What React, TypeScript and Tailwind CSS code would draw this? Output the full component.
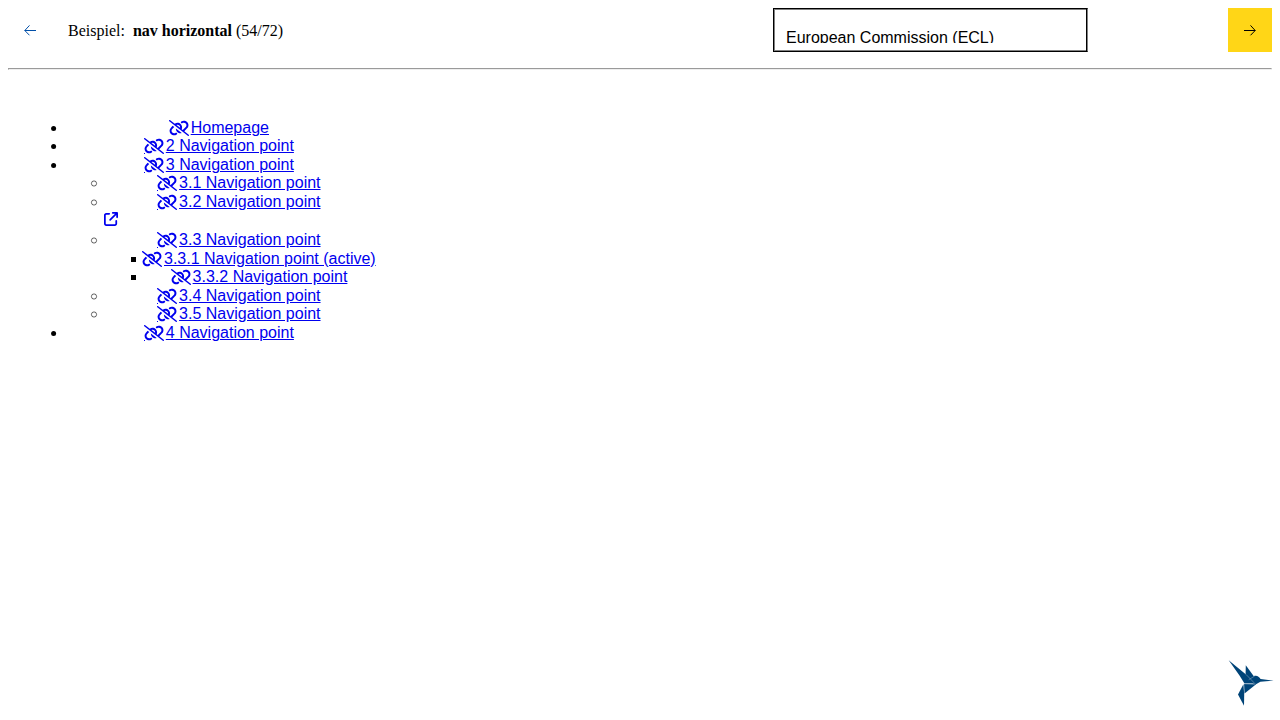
import { FaArrowUpRightFromSquare, FaLinkSlash } from "react-icons/fa6";

type Marker = "disc" | "circle" | "square";
type Item = { label: string; marker: Marker; bullet: string; gap: string; tick?: boolean; external?: boolean };

const items: Item[] = [
  { label: "Homepage", marker: "disc", bullet: "ml-[51px]", gap: "ml-[111.7px]" },
  { label: "2 Navigation point", marker: "disc", bullet: "ml-[51px]", gap: "ml-[86.8px]", tick: true },
  { label: "3 Navigation point", marker: "disc", bullet: "ml-[51px]", gap: "ml-[86.8px]", tick: true },
  { label: "3.1 Navigation point", marker: "circle", bullet: "ml-[90.5px]", gap: "ml-[60.6px]", tick: true },
  { label: "3.2 Navigation point", marker: "circle", bullet: "ml-[90.5px]", gap: "ml-[60.6px]", tick: true, external: true },
  { label: "3.3 Navigation point", marker: "circle", bullet: "ml-[90.5px]", gap: "ml-[60.6px]", tick: true },
  { label: "3.3.1 Navigation point (active)", marker: "square", bullet: "ml-[131px]", gap: "ml-[5px]" },
  { label: "3.3.2 Navigation point", marker: "square", bullet: "ml-[131px]", gap: "ml-[33.6px]" },
  { label: "3.4 Navigation point", marker: "circle", bullet: "ml-[90.5px]", gap: "ml-[60.6px]", tick: true },
  { label: "3.5 Navigation point", marker: "circle", bullet: "ml-[90.5px]", gap: "ml-[60.6px]", tick: true },
  { label: "4 Navigation point", marker: "disc", bullet: "ml-[51px]", gap: "ml-[86.8px]", tick: true },
];

function Bullet({ kind }: { kind: Marker }) {
  return (
    <svg width="6" height="6" viewBox="0 0 6 6" className="shrink-0 overflow-visible">
      {kind === "disc" && <circle cx="2.6" cy="3.5" r="2.5" />}
      {kind === "circle" && <circle cx="3" cy="3.5" r="2.6" fill="none" stroke="#000" strokeWidth="0.6" />}
      {kind === "square" && <rect x="0" y="1" width="5" height="5" />}
    </svg>
  );
}

function Arrow({ flip = false }: { flip?: boolean }) {
  return (
    <svg width="12" height="12" viewBox="0 0 12 12" fill="none" stroke="currentColor" strokeWidth="1" className={flip ? "-scale-x-100" : ""}>
      <path d="M12 6.5H.8M5.5 1.4.8 6.5l4.7 4.8" />
    </svg>
  );
}

function Hummingbird() {
  return (
    <svg width="46" height="46" viewBox="0 0 46 46" fill="#004478">
      <path d="M.7.3 18 14.4l9.2 9.2H16.5l-5-8.2Z" />
      <path d="m17.8 5.3 8.2 11.2-4.5 3.6-3.9-5.6Z" />
      <path d="m20.5 19.5 5.5-3.5c2.8-1 5.1.5 6.6 2.9l13 1.7-13.2 1.2-5.3 3-4.5-3Z" />
      <path d="m16.1 24.1 12 .1-11.6 9.2Z" />
      <path d="m15.4 24.2.8 10-.2 11.5-6-11.2Z" />
      <path d="m18 14.4 8.5 8.8M15.5 23.8h12M20.7 19.7l6-3.6" fill="none" stroke="#b8cddd" strokeWidth=".4" />
    </svg>
  );
}

export default function App() {
  return (
    <main className="flex h-screen flex-col overflow-hidden bg-white text-[16px] text-black">
      <header className="mx-2 mt-2 flex h-11 shrink-0 items-center">
        <button className="flex size-11 items-center justify-center text-[#004fa8]" aria-label="Previous"><Arrow /></button>
        <div className="ml-4 w-[705px] whitespace-pre pt-[2px] font-['Liberation_Serif',serif] leading-[18px]">
          Beispiel:{"  "}<b>nav horizontal</b> (54/72)
        </div>
        <div className="h-11 w-[315px] border border-r-[#808080] border-y-black border-l-black pl-3 pt-[19px] font-['Liberation_Sans',sans-serif] shadow-[inset_-1px_0_0_#000,inset_1px_0_0_#808080,inset_0_1px_0_#808080,inset_0_-1px_0_#808080]">
          <div className="h-[15px] overflow-hidden leading-[20px]">European Commission (ECL)</div>
        </div>
        <button className="ml-auto flex size-11 items-center justify-center bg-[#ffd617]" aria-label="Next"><Arrow flip /></button>
      </header>
      <hr className="mx-2 mt-4 h-[2px] shrink-0 border border-b-[#eeeeee] border-l-[#9a9a9a] border-r-[#eeeeee] border-t-[#9a9a9a]" />
      <nav className="mt-[48.5px] grow font-['Liberation_Sans',sans-serif]">
        <ul>
          {items.map((item) => (
            <li key={item.label}>
              <div className="flex h-[18.5px] items-center leading-[18px]">
                <span className={item.bullet}><Bullet kind={item.marker} /></span>
                <a href="#" className={`flex items-center text-[#0000ee] ${item.gap}`}>
                  <span className="relative mr-[2px] flex">
                    <FaLinkSlash className="h-4 w-5" />
                    {item.tick && <span className="absolute bottom-0 left-0 h-px w-px bg-[#0000ee]" />}
                  </span>
                  <span className="whitespace-nowrap underline">{item.label}</span>
                </a>
              </div>
              {item.external && (
                <a href="#" className="ml-[104px] flex h-5 w-4 items-start pt-[0.8px] text-[#0000ee]"><FaArrowUpRightFromSquare className="size-[14px]" /></a>
              )}
            </li>
          ))}
        </ul>
      </nav>
      <footer className="mb-[14px] mr-[6px] flex shrink-0 justify-end"><Hummingbird /></footer>
    </main>
  );
}
